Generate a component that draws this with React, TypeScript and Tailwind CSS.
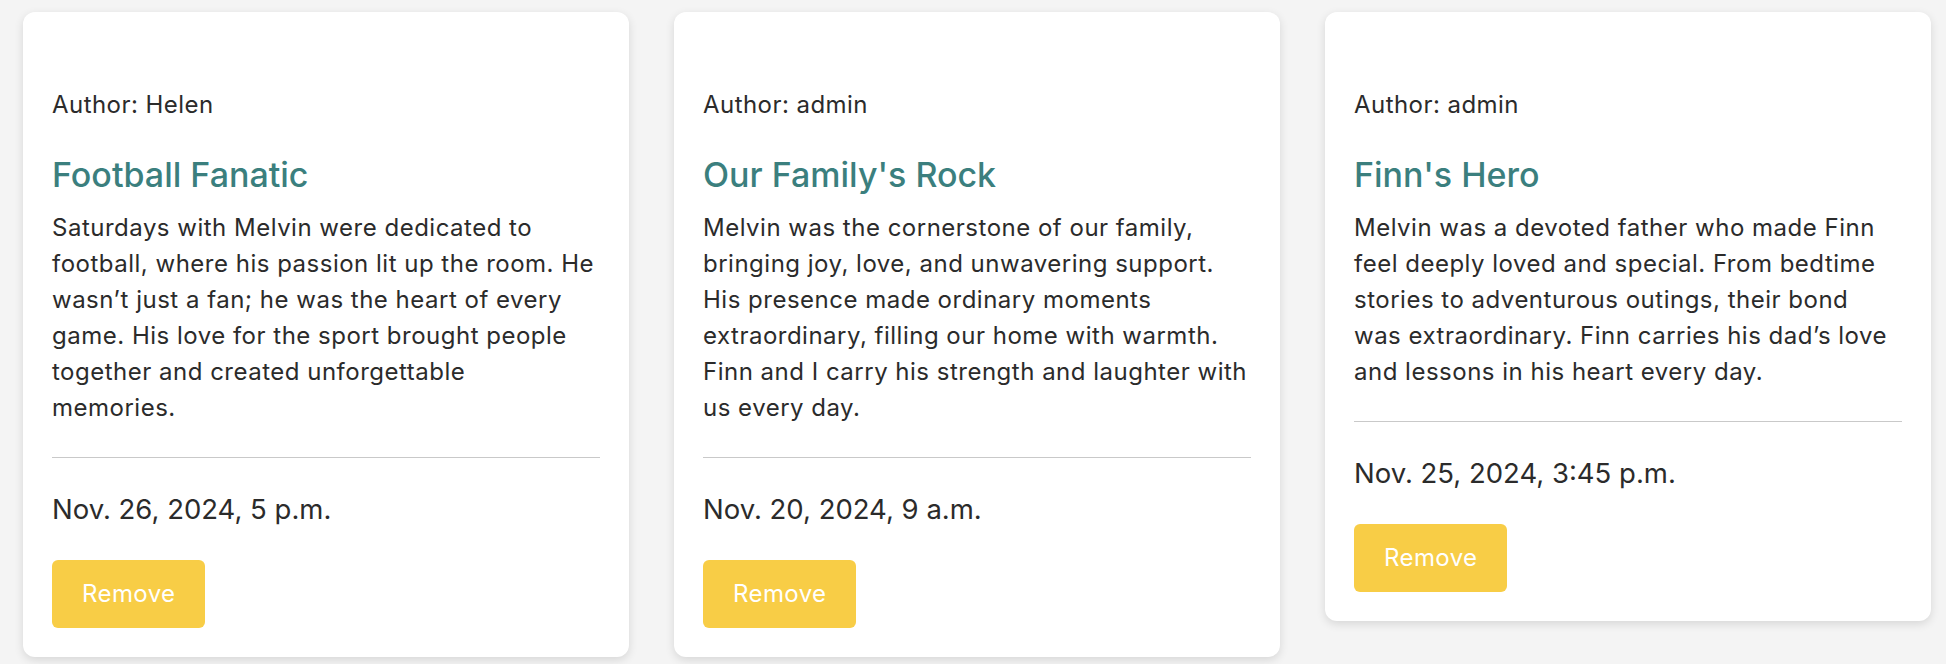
import React from 'react';

type Post = {
  author: string;
  title: string;
  body: string;
  date: string;
};

const posts: Post[] = [
  {
    author: 'Helen',
    title: 'Football Fanatic',
    body: 'Saturdays with Melvin were dedicated to football, where his passion lit up the room. He wasn’t just a fan; he was the heart of every game. His love for the sport brought people together and created unforgettable\nmemories.',
    date: 'Nov. 26, 2024, 5 p.m.',
  },
  {
    author: 'admin',
    title: "Our Family's Rock",
    body: 'Melvin was the cornerstone of our family, bringing joy, love, and unwavering support. His presence made ordinary moments extraordinary, filling our home with warmth. Finn and I carry his strength and laughter with us every day.',
    date: 'Nov. 20, 2024, 9 a.m.',
  },
  {
    author: 'admin',
    title: "Finn's Hero",
    body: 'Melvin was a devoted father who made Finn feel deeply loved and special. From bedtime stories to adventurous outings, their bond was extraordinary. Finn carries his dad’s love and lessons in his heart every day.',
    date: 'Nov. 25, 2024, 3:45 p.m.',
  },
];

const PostCard = ({ post }: { post: Post }) => (
  <article className="flex w-[606px] flex-shrink-0 flex-col rounded-[12px] bg-white px-[29px] pb-[29px] pt-[75px] shadow-[0_3px_10px_rgba(0,0,0,0.12)]">
    {/* Meta */}
    <p className="text-[24px] leading-[36px] tracking-[0.45px]">Author: {post.author}</p>
    <h3 className="mt-[32px] text-[34px] font-medium leading-[1.2] text-[#3b7f7e]">{post.title}</h3>
    <p className="mt-[14px] whitespace-pre-line text-[24px] leading-[36px] tracking-[0.5px]">{post.body}</p>

    <hr className="mt-[31px] border-0 border-t-[1.5px] border-[#c9c9c9]" />

    <p className="mt-[29px] text-[27.5px] leading-[45px]">{post.date}</p>

    <div className="mt-[28px]">
      <button className="h-[68px] rounded-[6px] bg-[#f8cd46] px-[30px] text-[24px] tracking-[0.4px] text-white">
        Remove
      </button>
    </div>
  </article>
);

export default function App() {
  return (
    <div className="min-h-[664px] bg-[#f4f4f4] font-['Inter','Noto_Sans',sans-serif] text-[#2b2b2b]">
      <div className="flex items-start gap-[45px] pl-[23px] pt-[12px]">
        {posts.map((post) => (
          <PostCard key={post.title} post={post} />
        ))}
      </div>
    </div>
  );
}
